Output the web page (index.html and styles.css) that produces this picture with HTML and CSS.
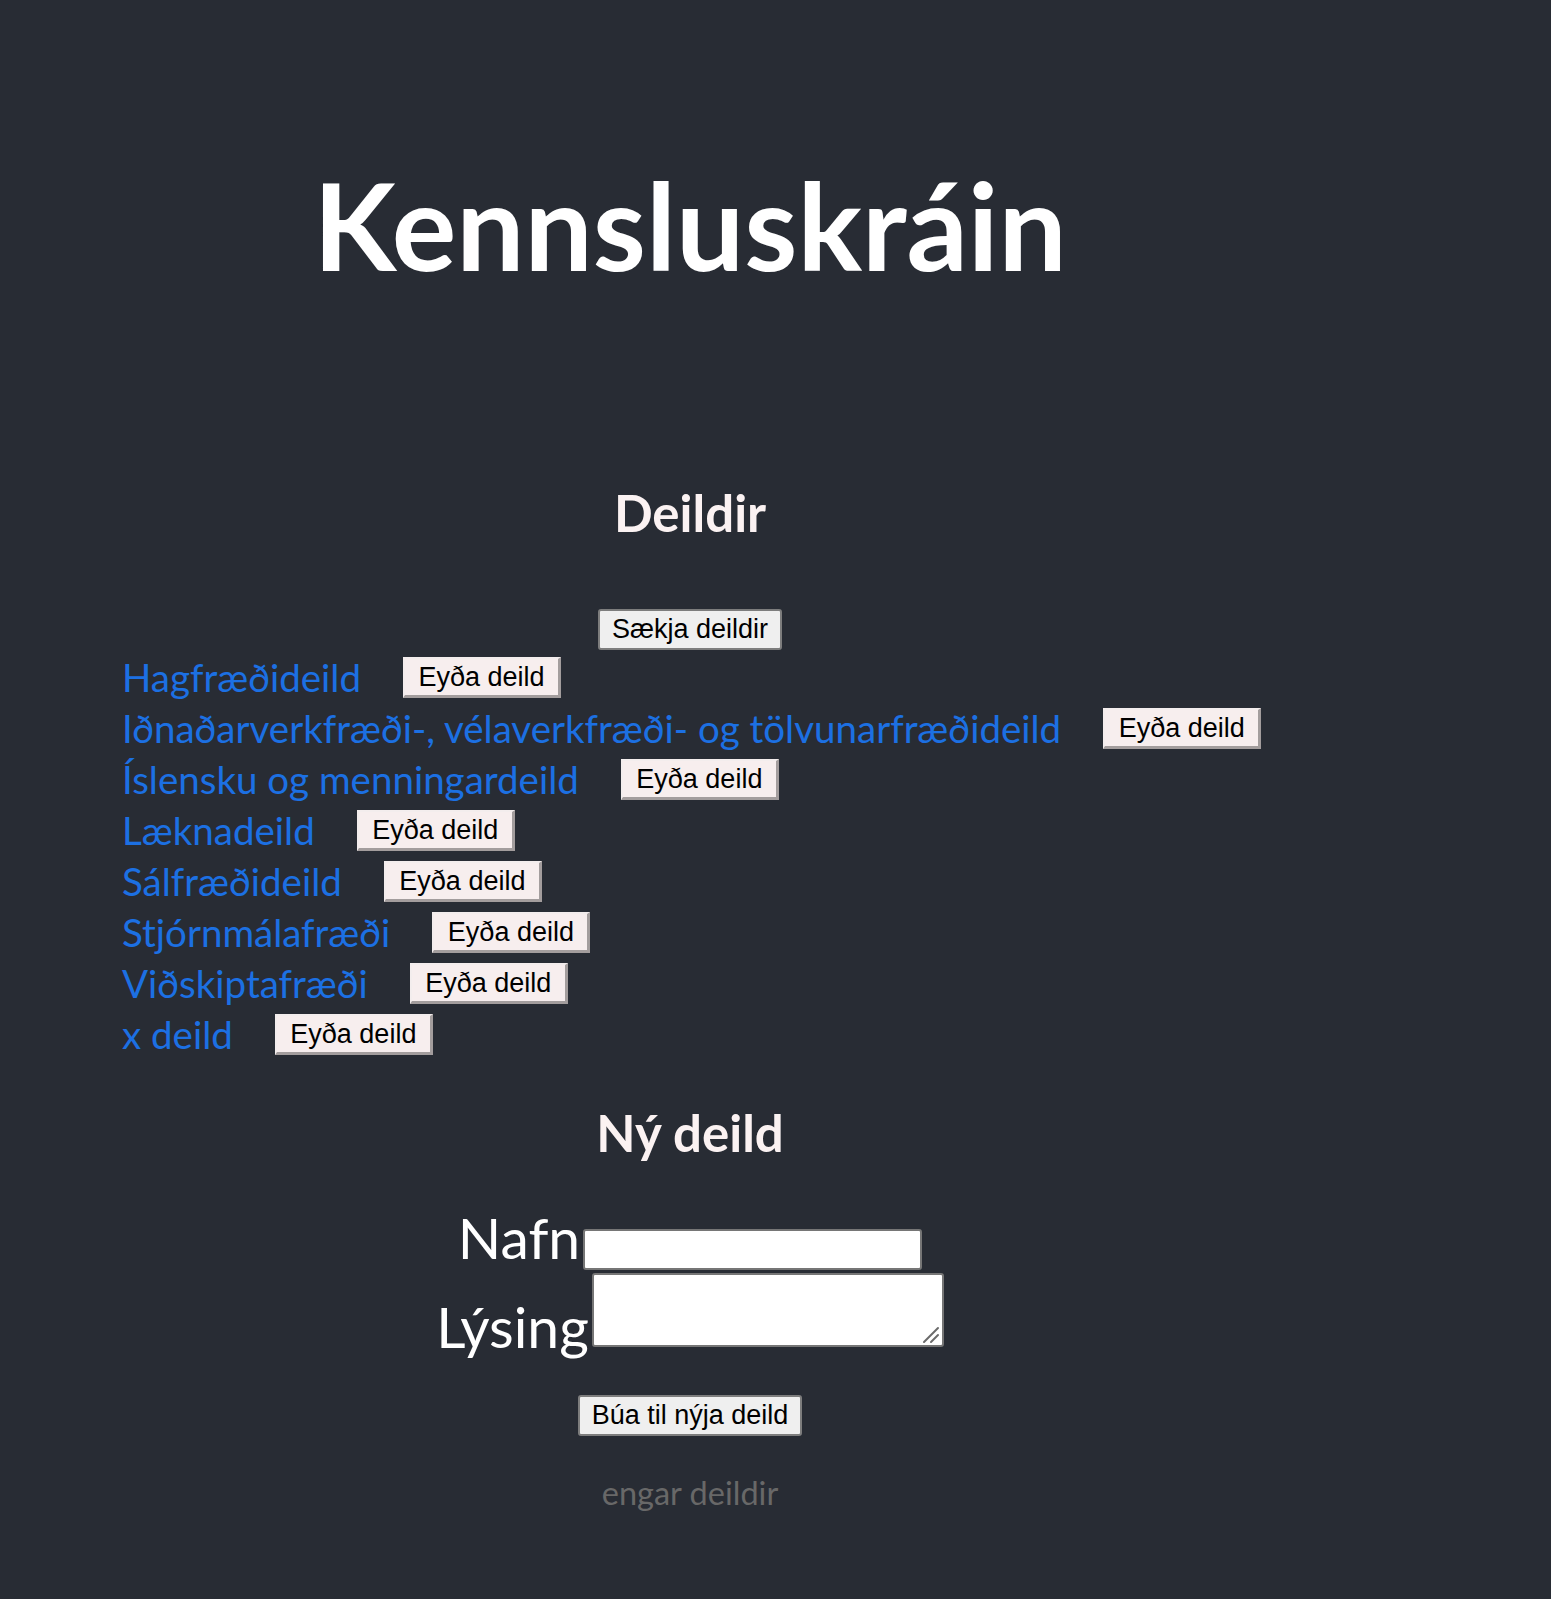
FILE: index.html
```html
<!DOCTYPE html>
<html lang="is">
<head>
<meta charset="utf-8">
<title>Kennsluskráin</title>
<link rel="stylesheet" href="styles.css">
</head>
<body>
<div class="app">
  <h1 class="title">Kennsluskráin</h1>
  <h2 class="section-title deildir-title">Deildir</h2>
  <div class="fetch-row"><button class="btn-native">Sækja deildir</button></div>
  <ul class="dept-list">
    <li class="dept"><a class="dept-link" href="#">Hagfræðideild</a><button class="btn-delete">Eyða deild</button></li>
    <li class="dept"><a class="dept-link" href="#">Iðnaðarverkfræði-, vélaverkfræði- og tölvunarfræðideild</a><button class="btn-delete">Eyða deild</button></li>
    <li class="dept"><a class="dept-link" href="#">Íslensku og menningardeild</a><button class="btn-delete">Eyða deild</button></li>
    <li class="dept"><a class="dept-link" href="#">Læknadeild</a><button class="btn-delete">Eyða deild</button></li>
    <li class="dept"><a class="dept-link" href="#">Sálfræðideild</a><button class="btn-delete">Eyða deild</button></li>
    <li class="dept"><a class="dept-link" href="#">Stjórnmálafræði</a><button class="btn-delete">Eyða deild</button></li>
    <li class="dept"><a class="dept-link" href="#">Viðskiptafræði</a><button class="btn-delete">Eyða deild</button></li>
    <li class="dept"><a class="dept-link" href="#">x deild</a><button class="btn-delete">Eyða deild</button></li>
  </ul>
  <h2 class="section-title new-title">Ný deild</h2>
  <form class="new-form">
    <div class="form-row row-name">
      <label class="form-label" for="nafn">Nafn</label>
      <input class="form-input" id="nafn" type="text">
    </div>
    <div class="form-row row-desc">
      <label class="form-label" for="lysing">Lýsing</label>
      <div class="textarea-wrap">
        <textarea class="form-textarea" id="lysing"></textarea>
        <svg class="grip" width="20" height="20" viewBox="0 0 20 20" aria-hidden="true">
          <line x1="3" y1="18" x2="17" y2="4" stroke="#6a6a6a" stroke-width="2" stroke-linecap="round"/>
          <line x1="10" y1="18" x2="17" y2="11" stroke="#6a6a6a" stroke-width="2" stroke-linecap="round"/>
        </svg>
      </div>
    </div>
    <div class="submit-row"><button class="btn-native" type="button">Búa til nýja deild</button></div>
  </form>
  <p class="empty">engar deildir</p>
</div>
</body>
</html>
```

FILE: styles.css
```css
html, body {
  margin: 0;
  padding: 0;
}

body {
  background: #282c34;
  min-height: 1599px;
  font-family: Lato, "Open Sans", sans-serif;
  color: #ffffff;
}

.app {
  width: 1216px;
  margin-left: 82px;
  text-align: center;
  padding-top: 164px;
}

.title {
  margin: 0;
  font-size: 121px;
  line-height: 1;
  font-weight: 700;
  color: #ffffff;
}

.section-title {
  margin: 0;
  font-size: 51px;
  line-height: 1;
  font-weight: 700;
  color: #fbf2f2;
}

.deildir-title {
  margin-top: 202px;
}

.fetch-row {
  margin-top: 71px;
  display: flex;
  justify-content: center;
}

.btn-native,
.btn-delete {
  font-family: "Liberation Sans", Arial, sans-serif;
  font-size: 27px;
  color: #000000;
  height: 41px;
  box-sizing: border-box;
  line-height: 1;
  cursor: pointer;
}

.btn-native {
  padding: 0 12px;
  background: #efefef;
  border: 2px solid #7d7d7d;
  border-radius: 3px;
}

.btn-delete {
  padding: 0 13.5px;
  background: #f7eeee;
  border-style: solid;
  border-width: 2px 3px 3px 2px;
  border-color: #f3eded #a39d9d #a39d9d #f3eded;
  border-radius: 0;
}

.dept-list {
  list-style: none;
  margin: 2px 0 0 0;
  padding: 0 0 0 40px;
  text-align: left;
}

.dept {
  height: 51px;
  display: flex;
  align-items: center;
  gap: 42px;
}

.dept-link {
  font-size: 38.5px;
  line-height: 51px;
  color: #1c70e3;
  text-decoration: none;
  white-space: nowrap;
}

.new-title {
  margin-top: 47px;
}

.new-form {
  margin: 0;
}

.form-row {
  display: flex;
  justify-content: center;
  align-items: flex-start;
  gap: 3px;
}

.row-name {
  margin-top: 51px;
}

.row-desc {
  margin-top: 3px;
}

.form-label {
  font-size: 57px;
  line-height: 1;
  color: #ffffff;
}

.row-desc .form-label {
  margin-top: 25px;
}

.form-input {
  margin: 20px 0 0 0;
  width: 339px;
  height: 41px;
  box-sizing: border-box;
  border: 2px solid #767676;
  border-radius: 3px;
  background: #ffffff;
  padding: 0 4px;
}

.textarea-wrap {
  position: relative;
  width: 352px;
  height: 74px;
}

.form-textarea {
  display: block;
  margin: 0;
  width: 352px;
  height: 74px;
  box-sizing: border-box;
  border: 2px solid #767676;
  border-radius: 3px;
  background: #ffffff;
  padding: 4px;
  resize: none;
}

.grip {
  position: absolute;
  right: 3px;
  bottom: 3px;
  pointer-events: none;
}

.submit-row {
  margin-top: 40px;
  display: flex;
  justify-content: center;
}

.empty {
  margin: 41px 0 0 0;
  font-size: 32.5px;
  line-height: 1;
  color: #686868;
}
```
